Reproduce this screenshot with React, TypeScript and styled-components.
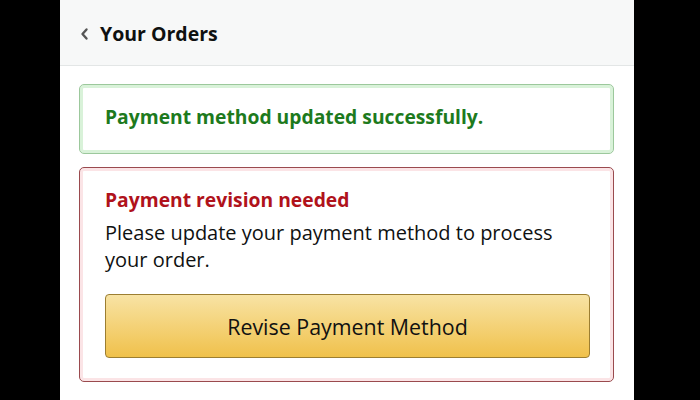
import React from "react";
import styled, { createGlobalStyle } from "styled-components";

const GlobalStyle = createGlobalStyle`
  html, body {
    margin: 0;
    padding: 0;
    background: #000;
    width: 700px;
    height: 400px;
    overflow: hidden;
  }
  #root {
    height: 400px;
  }
`;

const Screen = styled.div`
  display: flex;
  justify-content: center;
  height: 400px;
  padding-left: 60px;
  padding-right: 66px;
  box-sizing: border-box;
`;

const Page = styled.div`
  flex: 1;
  background: #fff;
  display: flex;
  flex-direction: column;
  font-family: "Open Sans", "Noto Sans", sans-serif;
`;

const Header = styled.div`
  height: 66px;
  box-sizing: border-box;
  background: #f7f8f8;
  border-bottom: 1px solid #e3e6e6;
  display: flex;
  align-items: center;
  padding: 2px 0 0 20px;
  gap: 11px;
`;

const Title = styled.h1`
  margin: 0;
  font-size: 19.5px;
  font-weight: 700;
  color: #0f1111;
`;

const Content = styled.div`
  display: flex;
  flex-direction: column;
  gap: 13px;
  padding: 18px 20px 0 19px;
`;

const Alert = styled.div<{ $tone: "success" | "error" }>`
  border-radius: 5px;
  border: 1px solid
    ${({ $tone }) => ($tone === "success" ? "#9cc89c" : "#9a4a4e")};
  box-shadow: inset 0 0 0 3px
    ${({ $tone }) => ($tone === "success" ? "#d9f2d9" : "#fbe4e6")};
  background: #fff;
`;

const SuccessBody = styled.div`
  height: 68px;
  box-sizing: border-box;
  display: flex;
  align-items: center;
  padding: 0 25px 5px;
  font-size: 19.3px;
  font-weight: 700;
  color: #1d7a1d;
`;

const ErrorBody = styled.div`
  padding: 18px 23px 23px 25px;
`;

const ErrorTitle = styled.div`
  font-size: 19.3px;
  font-weight: 700;
  color: #b0121b;
  line-height: 28px;
`;

const ErrorText = styled.p`
  margin: 5px 0 0;
  font-size: 20px;
  color: #0f1111;
  line-height: 27px;
`;

const ReviseButton = styled.button`
  display: block;
  margin-top: 21px;
  width: 100%;
  height: 64px;
  border-radius: 4px;
  border: 1px solid #9c7e31;
  background: linear-gradient(to bottom, #f8e3a4, #f0c14b);
  font-family: "Open Sans", "Noto Sans", sans-serif;
  font-size: 21.4px;
  color: #111;
  cursor: pointer;
`;

const BackIcon = () => (
  <svg width="9" height="14" viewBox="0 0 9 14">
    <path
      d="M6.5 2.5 L2.5 7 L6.5 11.5"
      fill="none"
      stroke="#555"
      strokeWidth="2.4"
      strokeLinecap="round"
      strokeLinejoin="round"
    />
  </svg>
);

const App = () => (
  <>
    <GlobalStyle />
    <Screen>
      <Page>
        <Header>
          <BackIcon />
          <Title>Your Orders</Title>
        </Header>
        <Content>
          <Alert $tone="success">
            <SuccessBody>Payment method updated successfully.</SuccessBody>
          </Alert>
          <Alert $tone="error">
            <ErrorBody>
              <ErrorTitle>Payment revision needed</ErrorTitle>
              <ErrorText>
                Please update your payment method to process your order.
              </ErrorText>
              <ReviseButton>Revise Payment Method</ReviseButton>
            </ErrorBody>
          </Alert>
        </Content>
      </Page>
    </Screen>
  </>
);

export default App;
